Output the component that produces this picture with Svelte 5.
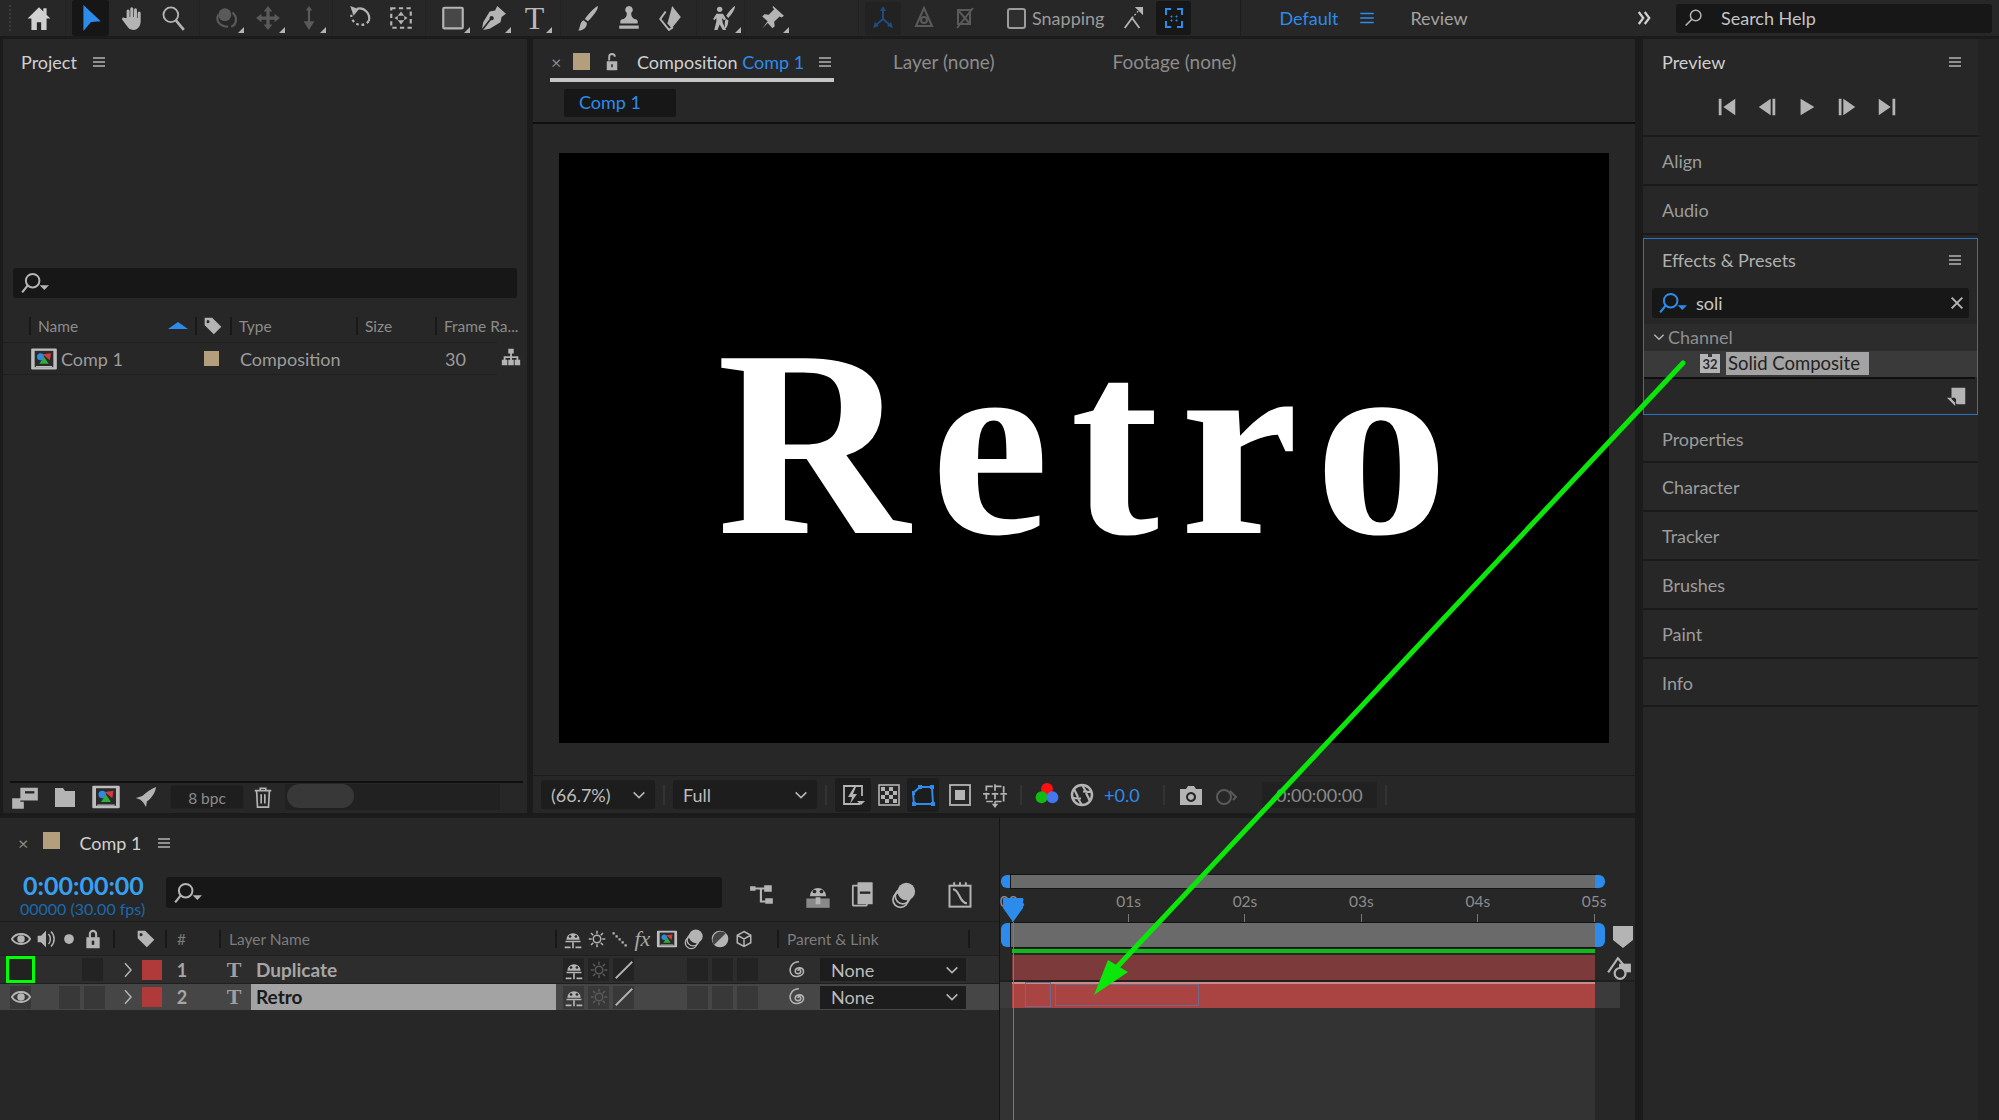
<script>
  const S = 'fill="none" stroke="currentColor"';
  const I = {
    home: '<path d="M12 2 1.500 12.500H5V23h5v-7h4v7h5V12.500h3.500L19 9V3h-3v3z"/>',
    arrow: '<path d="M5 0 21 15l-9 .6L5 24z"/>',
    hand: '<path d="M7 12V5.500a1.400 1.400 0 0 1 2.800 0V11h.6V3.500a1.400 1.400 0 0 1 2.800 0V11h.6V4.500a1.400 1.400 0 0 1 2.800 0V12h.6V7.500a1.400 1.400 0 0 1 2.800 0V15c0 4-2.500 8-6.500 8-3.500 0-5-1.500-6.500-4L3 13.500c-.8-1.500 1-2.500 2-1.500z"/>',
    zoom: `<circle cx="10" cy="9" r="6.800" ${S} stroke-width="1.700"/><path d="M14.500 14 22 23" ${S} stroke-width="2.400"/>`,
    orbit: `<circle cx="10" cy="9" r="6"/><path d="M4 9c-3 6 2 11 9 11M17 7c5 4 4 11-1 13" ${S} stroke-width="2"/>`,
    move: '<path d="M12 1l4 5h-2.500v4.500H18V8l5 4-5 4v-2.500h-4.500V18H16l-4 5-4-5h2.500v-4.500H6V16l-5-4 5-4v2.500h4.500V6H8z"/>',
    updown: '<path d="M12 1l3 4h-2v10h4l-5 8-5-8h4V5H9z"/>',
    rotate: `<path d="M9 3.500A9 9 0 0 1 20 15" ${S} stroke-width="2"/><path d="M20 15A9 9 0 0 1 4 9" ${S} stroke-width="2" stroke-dasharray="2.500 2.500"/><path d="M3 1l8 3-5 6z"/>`,
    pan: `<rect x="3" y="3" width="18" height="18" ${S} stroke-width="2" stroke-dasharray="4 3"/><path d="M12 6l3 4H9zM12 18l-3-4h6zM6 12l3-2v4zM18 12l-3 2v-4z"/>`,
    rect: `<rect x="3" y="2.500" width="18" height="19" rx="1" fill="#474747" stroke="currentColor" stroke-width="2"/>`,
    pen: '<path d="M15 1l8 7-4 3-1 5-10 6-6 1 7-9a2 2 0 1 0-1-1L1 22l1-6 6-10 5-1z"/>',
    brush: '<path d="M21 1c1 3-5 10-9 14l-3-2C12 9 18 2 21 1zM8 14l3 2.500c0 4-3 7-8 7 2-2 1-8 5-9.500z"/>',
    stamp: '<path d="M12 1a3.500 3.500 0 0 1 2 6.400c0 3 1 4.600 3 5.600 2 .4 3 1 3 2v2H4v-2c0-1 1-1.600 3-2 2-1 3-2.600 3-5.600A3.500 3.500 0 0 1 12 1zM3 19h18v3H3z"/>',
    eraser: `<path d="M14 1l8 10-8 10-4-5z"/><path d="M10 16l4 5-3 2-8-10 5-7" ${S} stroke-width="1.800"/>`,
    puppet: '<circle cx="8" cy="4" r="2.500"/><path d="M5 8h6l3 5-2 1-2-2 1 5 3 6h-3l-3-5-2 5H3l2-8V12l-2 2-1-1zM22 1c1 2-3 8-6 11l-2-2c2-3 6-8 8-9zM14 13l2 1c0 3-1 7-3 8 0-3-1-7 1-9z"/>',
    pin: '<path d="M13 1l10 9-2 1.500-2-1-5 5 .5 4-2 2-4.500-5L3 22l5-7-5-4.500 2-2 4 .5 5-5-1.500-2z"/>',
    axis1: `<path d="M12 2v11M12 13l-8 7M12 13l8 7" ${S} stroke-width="2"/><path d="M12 0l3 5H9zM2 22l2-6 4 4zM22 22l-6-2 4-4z"/>`,
    axis2: `<path d="M12 2L4 20h16z" ${S} stroke-width="2"/><circle cx="12" cy="14" r="3" ${S} stroke-width="2"/>`,
    axis3: `<path d="M5 4h12v14H5zM5 4l12 14M20 2 4 22" ${S} stroke-width="2"/>`,
    snap: `<path d="M3 23l8-11 8 11" ${S} stroke-width="2"/><path d="M11 12 19 3" ${S} stroke-width="1.500" stroke-dasharray="2 2"/><path d="M23 0v9l-9-9z"/>`,
    focus: `<path d="M4 9V3h5M15 3h5v6M4 15v6h5M15 21h5v-6" ${S} stroke-width="2"/><path d="M9 10h1v1H9zM14 10h1v1h-1zM9 14h1v1H9zM14 14h1v1h-1z" stroke="currentColor"/>`,
    search: `<circle cx="14" cy="9" r="6.300" ${S} stroke-width="1.800"/><path d="M9.500 13.500 2 21" ${S} stroke-width="2"/>`,
    searchd: `<circle cx="10" cy="10" r="5.800" ${S} stroke-width="1.700"/><path d="M5.800 14 1 20" ${S} stroke-width="1.900"/><path d="M16 14h8l-4 4z"/>`,
    menu: '<path d="M3 5h18v2H3zM3 11h18v2H3zM3 17h18v2H3z"/>',
    first: '<path d="M3 3h3v18H3zM21 3v18L8 12z"/>',
    prev: '<path d="M18 3h3v18h-3zM16 3v18L3 12z"/>',
    play: '<path d="M5 3v18l15-9z"/>',
    next: '<path d="M3 3h3v18H3zM8 3v18l13-9z"/>',
    last: '<path d="M18 3h3v18h-3zM3 3v18l13-9z"/>',
    chev: `<path d="M4 8l8 8 8-8" ${S} stroke-width="2.400"/>`,
    right: `<path d="M8 3l8 9-8 9" ${S} stroke-width="2"/>`,
    dbl: `<path d="M5 4l6 8-6 8M13 4l6 8-6 8" ${S} stroke-width="3"/>`,
    lockopen: '<path d="M5 11h14v12H5zM7 10V5a5 5 0 0 1 10 0h-2.500a2.500 2.500 0 0 0-5 0v5z"/><path d="M11 15h2v4h-2z" fill="#272727"/>',
    tag: '<path d="M2 2h9l11 11-9 9L2 11zM6.500 5A1.800 1.800 0 1 0 6.600 8.500 1.800 1.800 0 0 0 6.500 5z"/>',
    tree: '<path d="M9 2h6v5h-2v3h7v4h2v6h-6v-6h2v-2h-5v2h2v6H9v-6h2v-2H6v2h2v6H2v-6h2v-4h7V7H9z"/>',
    film: `<rect x="1" y="3" width="22" height="18" rx="1" fill="#bdbdbd"/><rect x="4" y="5" width="16" height="14" fill="#2a2a2a"/><circle cx="9" cy="10" r="3" fill="#2f8ae0"/><path d="M11 8l7-1-1 6z" fill="#d63a3a"/><path d="M12 10l4 6H8z" fill="#2fae3f"/><path d="M5 18h14v1H5z" fill="#bdbdbd"/>`,
    interp: '<path d="M8 4h15v11H8zM1 13h7v3h3v6H1zM1 20h10"/><path d="M12 7h8v2h-8z" fill="#272727"/>',
    folder: '<path d="M2 3h8l2 3h10v16H2z"/>',
    rocket: '<path d="M23 1c-1 7-5 12-10 16l-1 6-3-5-3-3-5-2 7-2C12 7 17 3 23 1z"/>',
    trash: `<path d="M3 5h18M9 5V2.500h6V5M5 5l1 18h12l1-18M10 9v10M14 9v10" ${S} stroke-width="1.800"/>`,
    flash: `<path d="M19 21H3V3h18v10" ${S} stroke-width="1.800"/><path d="M13 4l-6 10h4l-2 7 7-10h-4l3-7z"/><path d="M16 18h8l-4 4z"/>`,
    checker: `<rect x="2" y="2" width="20" height="20" ${S} stroke-width="1.600"/><path d="M4 4h4v4H4zM12 4h4v4h-4zM8 8h4v4H8zM16 8h4v4h-4zM4 12h4v4H4zM12 12h4v4h-4zM8 16h4v4H8zM16 16h4v4h-4z"/>`,
    mask: `<path d="M9 4h12l1 17H3L2 10z" ${S} stroke-width="2"/><path d="M7 2h4v4H7zM19 2h4v4h-4zM1 8h3v4H1zM1 19h4v4H1zM20 19h4v4h-4z"/>`,
    safe: `<rect x="2" y="2" width="20" height="20" ${S} stroke-width="1.800"/><rect x="7" y="7" width="10" height="10"/>`,
    grid: `<path d="M4 4h16v14H4zM12 2v18M1 11h22" ${S} stroke-width="1.600" stroke-dasharray="6 2"/><path d="M9 20h6l-3 4z"/>`,
    rgb: '<circle cx="12" cy="6.500" r="5.500" fill="#f11"/><circle cx="7" cy="14" r="5.500" fill="#1b1"/><circle cx="17" cy="14" r="5.500" fill="#47e"/>',
    aperture: `<circle cx="12" cy="12" r="10" ${S} stroke-width="2.500"/><path d="M12 2l5 8M22 9l-9-.5M20 18l-4-8M12 22l-5-8M2 15l9 .5M4 6l4 8" ${S} stroke-width="2.200"/>`,
    camera: '<path d="M1 6h6l2-3h6l2 3h6v16H1zM12 9a5 5 0 1 0 .1 0zM12 11a3 3 0 1 1-.1 0z" fill-rule="evenodd"/>',
    link2: `<circle cx="9" cy="14" r="7" ${S} stroke-width="2"/><path d="M15 8l6 6-3 3" ${S} stroke-width="2"/>`,
    flow: `<path d="M3 6h12M11 6v12h5M11 6h5" ${S} stroke-width="2"/><path d="M1 4h5v4H1zM14 3h7v6h-7zM15 15h7v5h-7z"/>`,
    shy: `<path d="M3 14h18v2H3zM2 21h7v2H2zM15 21h7v2h-7z"/><path d="M4 13a8 8 0 0 1 16 0zM11 16h2v7h-2z"/><circle cx="8.500" cy="9" r="1.600" fill="#272727"/><circle cx="15.500" cy="9" r="1.600" fill="#272727"/>`,
    shyup: `<path d="M2 15h20v8H2z" opacity=".7"/><path d="M5 13a7 7 0 0 1 14 0zM10 14h4v6h-4z"/><circle cx="9" cy="9" r="1.600" fill="#272727"/><circle cx="15" cy="9" r="1.600" fill="#272727"/>`,
    stack: `<rect x="5" y="4" width="12" height="17" rx=".5" ${S} stroke-width="1.500"/><rect x="9" y="1" width="13" height="19" rx=".5"/><path d="M11 9h9v2h-9z" fill="#272727"/>`,
    circles: `<circle cx="9" cy="16" r="6.500" ${S} stroke-width="1.500"/><circle cx="11" cy="13" r="6.500" ${S} stroke-width="1.500" /><circle cx="14" cy="9" r="7.500"/>`,
    graph: `<rect x="3" y="4" width="18" height="18" ${S} stroke-width="1.700"/><path d="M6 7c6 0 5 12 12 12M7 1v3M12 1v3M17 1v3" ${S} stroke-width="1.700"/>`,
    eye: `<path d="M1 12c5-8 17-8 22 0-5 8-17 8-22 0z" ${S} stroke-width="2.200"/><circle cx="12" cy="12" r="4.500"/>`,
    speaker: `<path d="M2 8h4l6-6v20l-6-6H2z"/><path d="M15 6c3 3 3 9 0 12M18 3c5 5 5 13 0 18" ${S} stroke-width="1.800"/>`,
    dot: '<circle cx="12" cy="12" r="6.500"/>',
    lock: '<path d="M4 10h16v13H4zM7 10V6a5 5 0 0 1 10 0v4h-2.500V6a2.500 2.500 0 0 0-5 0v4z"/><path d="M10.500 14h3v5h-3z" fill="#272727"/>',
    sun: `<circle cx="12" cy="12" r="5" ${S} stroke-width="2"/><path d="M12 1v4M12 19v4M1 12h4M19 12h4M4 4l3 3M17 17l3 3M20 4l-3 3M7 17l-3 3" ${S} stroke-width="2"/>`,
    dots: '<path d="M2 3h3v3H2zM6 7h3v3H6zM10 11h3v3h-3zM14 15h3v3h-3zM18 19h3v3h-3z"/>',
    slash: `<path d="M3 21 21 3" ${S} stroke-width="2"/>`,
    halfdisc: `<circle cx="12" cy="12" r="10"/><path d="M5 19 19 5A10 10 0 0 0 5 19z" fill="#444"/>`,
    cube: `<path d="M12 2l9 5v10l-9 5-9-5V7zM3 7l9 5 9-5M12 12v10" ${S} stroke-width="2"/>`,
    spiral: `<path d="M12 13c0-2 3-2 3 .5 0 3-6 3.500-6 0C9 9 17 8 18 13c1 6-11 9-14 2C2 9 6 3 13 3" ${S} stroke-width="1.700"/>`,
    shield: '<path d="M2 1h20v14l-10 8-10-8z"/>',
    flowside: `<path d="M2 16 11 3l6 7" ${S} stroke-width="2"/><path d="M12 8h11v8H12z"/><circle cx="13" cy="17" r="5" fill="#272727" stroke="currentColor" stroke-width="2"/>`,
    newdoc: '<path d="M6 3h15v18H12l-6-6zM1 14h9v9z" fill-rule="evenodd"/><path d="M6 15h5v5z" fill="#272727"/>',
    close: `<path d="M4 4l16 16M20 4 4 20" ${S} stroke-width="3"/>`
  };

  const tools = [
    [{ n: 'arrow', cls: 'blue on' }, { n: 'hand' }, { n: 'zoom' }],
    [{ n: 'orbit', cls: 'dim', more: 1 }, { n: 'move', cls: 'dim', more: 1 }, { n: 'updown', cls: 'dim', more: 1 }],
    [{ n: 'rotate' }, { n: 'pan' }],
    [{ n: 'rect', more: 1 }, { n: 'pen', more: 1 }, { t: 'T', more: 1 }],
    [{ n: 'brush' }, { n: 'stamp' }, { n: 'eraser' }],
    [{ n: 'puppet', more: 1 }],
    [{ n: 'pin', more: 1 }]
  ];
  const dock = ['Properties', 'Character', 'Tracker', 'Brushes', 'Paint', 'Info'];
  const ticks = ['00s', '01s', '02s', '03s', '04s', '05s'];
  const layers = [
    { n: 1, name: 'Duplicate', sel: false },
    { n: 2, name: 'Retro', sel: true }
  ];
</script>

{#snippet ic(name, size = 20, cls = '')}
  <svg class="ic {cls}" width={size} height={size} viewBox="0 0 24 24" fill="currentColor">{@html I[name]}</svg>
{/snippet}

<div class="app">
  <header class="toolbar">
    <i class="grip"></i>
    <div class="home">{@render ic('home', 26, 'bright')}</div>
    {#each tools as group, g}
      <div class="group g{g}">
        {#each group as t}
          <div class="tool {t.cls ?? ''}" class:more={t.more}>
            {#if t.t}<span class="t-tool">{t.t}</span>{:else}{@render ic(t.n, 26)}{/if}
          </div>
        {/each}
      </div>
    {/each}
    <div class="group axis">
      <div class="axis-on">{@render ic('axis1', 24, 'navy')}</div>
      <div class="tool dim">{@render ic('axis2', 24)}</div>
      <div class="tool dim">{@render ic('axis3', 24)}</div>
    </div>
    <div class="snapping">
      <span class="check"></span>
      <span>Snapping</span>
      <div class="snap-ic">{@render ic('snap', 22)}</div>
      <div class="focus">{@render ic('focus', 24, 'blue')}</div>
    </div>
    <div class="work">
      <span class="blue">Default</span>
      {@render ic('menu', 18, 'blue')}
      <span class="review">Review</span>
    </div>
    <div class="more-btn">{@render ic('dbl', 18, 'bright')}</div>
    <div class="help">{@render ic('search', 20)}<span>Search Help</span></div>
  </header>

  <div class="main">
    <div class="left">
      <div class="upper">
        <section class="panel project">
          <div class="p-title"><span class="hi">Project</span>{@render ic('menu', 16)}</div>
          <div class="p-space"></div>
          <div class="searchbox wide">{@render ic('searchd', 28)}</div>
          <div class="col-head">
            <span>Name<i class="sort"></i></span>
            <span class="center">{@render ic('tag', 20)}</span>
            <span>Type</span>
            <span>Size</span>
            <span>Frame Ra...</span>
          </div>
          <div class="proj-row">
            <div class="pr-icon">{@render ic('film', 28)}</div>
            <span class="pr-name">Comp 1</span>
            <i class="swatch tan small"></i>
            <span class="pr-type">Composition</span>
            <span class="pr-rate">30</span>
            <div class="pr-tree">{@render ic('tree', 22)}</div>
          </div>
          <div class="p-fill"></div>
          <div class="proj-foot">
            {@render ic('interp', 28)}
            {@render ic('folder', 24)}
            {@render ic('film', 30)}
            {@render ic('rocket', 22)}
            <span class="bpc">8 bpc</span>
            <span class="trash">{@render ic('trash', 22)}</span>
            <div class="scroll"><i></i></div>
          </div>
        </section>

        <section class="panel comp">
          <div class="c-tabs">
            <div class="c-active">
              <span class="x">×</span>
              <i class="swatch tan"></i>
              {@render ic('lockopen', 18)}
              <span class="hi c-name">Composition <b class="blue">Comp 1</b></span>
              {@render ic('menu', 16)}
            </div>
            <span class="c-tab one">Layer (none)</span>
            <span class="c-tab two">Footage (none)</span>
          </div>
          <div class="c-crumb"><span class="blue">Comp 1</span></div>
          <div class="viewer">
            <div class="canvas"><span class="retro">Retro</span></div>
          </div>
          <div class="c-foot">
            <div class="select s1"><span>(66.7%)</span>{@render ic('chev', 16)}</div>
            <i class="sep"></i>
            <div class="select s2"><span>Full</span>{@render ic('chev', 16)}</div>
            <i class="sep"></i>
            <div class="btn dark">{@render ic('flash', 24)}</div>
            <div class="btn">{@render ic('checker', 24)}</div>
            <div class="btn dark narrow">{@render ic('mask', 24, 'blue')}</div>
            <div class="btn safe">{@render ic('safe', 24)}</div>
            <div class="btn w2">{@render ic('grid', 26)}</div>
            <i class="sep"></i>
            <div class="btn w2">{@render ic('rgb', 26)}</div>
            <div class="btn">{@render ic('aperture', 24)}</div>
            <span class="blue exposure">+0.0</span>
            <i class="sep"></i>
            <div class="btn">{@render ic('camera', 24)}</div>
            <div class="btn dim">{@render ic('link2', 24)}</div>
            <span class="cam-time">0:00:00:00</span>
            <i class="sep"></i>
          </div>
        </section>
      </div>

      <section class="panel timeline">
        <div class="tl-left">
          <div class="tl-tab">
            <span class="x">×</span>
            <i class="swatch tan"></i>
            <span class="hi">Comp 1</span>
            {@render ic('menu', 16)}
          </div>
          <div class="tl-ctrl">
            <div class="timecode">
              <b class="tc-main">0:00:00:00</b>
              <span class="tc-sub">00000 (30.00 fps)</span>
            </div>
            <div class="searchbox tl-search">{@render ic('searchd', 28)}</div>
            <div class="tl-btns">
              <span class="first">{@render ic('flow', 26)}</span>
              <span>{@render ic('shyup', 28)}</span>
              <span>{@render ic('stack', 28)}</span>
              <span>{@render ic('circles', 28)}</span>
              <span class="last">{@render ic('graph', 28)}</span>
            </div>
          </div>
          <div class="l-head">
            <div class="lh-av">
              {@render ic('eye', 20)}{@render ic('speaker', 20)}{@render ic('dot', 18)}{@render ic('lock', 20)}
            </div>
            <i class="bar b1"></i>
            <div class="lh-tag">{@render ic('tag', 20)}</div>
            <i class="bar"></i>
            <span class="lh-num">#</span>
            <i class="bar"></i>
            <span class="lh-name">Layer Name</span>
            <i class="bar"></i>
            <div class="lh-sw">
              {@render ic('shy', 20)}{@render ic('sun', 18)}{@render ic('dots', 18)}
              <span class="fx">fx</span>
              {@render ic('film', 22)}{@render ic('circles', 22)}{@render ic('halfdisc', 20)}{@render ic('cube', 18)}
            </div>
            <i class="bar"></i>
            <span class="lh-parent">Parent &amp; Link</span>
            <i class="bar b2"></i>
          </div>
          {#each layers as l}
            <div class="l-row" class:sel={l.sel}>
              <div class="l-av">
                {#if l.sel}
                  <div class="cell">{@render ic('eye', 20)}</div>
                {:else}
                  <div class="green-cell"></div>
                {/if}
                <div class="cell right2" class:clear={!l.sel}></div>
                <div class="cell"></div>
              </div>
              <div class="l-chev">{@render ic('right', 18)}</div>
              <i class="l-swatch"></i>
              <b class="l-num">{l.n}</b>
              <span class="l-t">T</span>
              <b class="l-name">{l.name}</b>
              <div class="l-cells">
                <div class="cell">{@render ic('shy', 20)}</div>
                <div class="cell">{@render ic('sun', 18, 'dim')}</div>
                <div class="cell">{@render ic('slash', 22)}</div>
              </div>
              <div class="l-cells mid">
                <div class="cell"></div>
                <div class="cell"></div>
                <div class="cell"></div>
              </div>
              <div class="l-spiral">{@render ic('spiral', 22)}</div>
              <div class="l-drop"><span>None</span>{@render ic('chev', 16)}</div>
            </div>
          {/each}
        </div>

        <div class="tl-right">
          <div class="nav">
            <i class="cap"></i>
            <div class="nav-bar"></div>
            <i class="cap end"></i>
          </div>
          <div class="ruler">
            {#each ticks as t}
              <div class="tick"><span>{t}</span><i></i></div>
            {/each}
          </div>
          <div class="workrow">
            <div class="nav big">
              <i class="cap"></i>
              <div class="nav-bar"></div>
              <i class="cap end"></i>
            </div>
            <div class="side">{@render ic('shield', 24)}</div>
          </div>
          <div class="green-bar"></div>
          <div class="track one">
            <div class="clip"></div>
            <div class="side s2">{@render ic('flowside', 26)}</div>
          </div>
          <div class="track two">
            <div class="clip">
              <i class="sel-a"></i>
              <i class="sel-b"></i>
            </div>
          </div>
          <div class="track-fill"><div></div></div>
          <div class="playhead"><svg width="22" height="24" viewBox="0 0 22 24"><path d="M1 0h20v10L11 24 1 10z" fill="#2d8ceb"/></svg><i></i></div>
        </div>
      </section>
    </div>

    <aside class="right">
      <section class="d-block">
        <div class="d-head"><span class="hi">Preview</span>{@render ic('menu', 16)}</div>
        <div class="transport">
          {@render ic('first', 22)}{@render ic('prev', 22)}{@render ic('play', 22)}{@render ic('next', 22)}{@render ic('last', 22)}
        </div>
      </section>
      <div class="d-item">Align</div>
      <div class="d-item">Audio</div>
      <section class="effects">
        <div class="d-head e"><span>Effects &amp; Presets</span>{@render ic('menu', 16)}</div>
        <div class="searchbox e-search">
          {@render ic('searchd', 28, 'blue')}
          <span>soli</span>
          <div class="e-x">{@render ic('close', 16)}</div>
        </div>
        <div class="e-cat">{@render ic('chev', 14)}<span>Channel</span></div>
        <div class="e-row">
          <span class="e-badge">32</span>
          <span class="e-sel">Solid Composite</span>
        </div>
        <div class="e-foot">{@render ic('newdoc', 22)}</div>
      </section>
      {#each dock as d}
        <div class="d-item">{d}</div>
      {/each}
    </aside>
    <div class="strip"></div>
  </div>

  <svg class="annot" width="1999" height="1120" viewBox="0 0 1999 1120">
    <path d="M1683 363 1118 966" stroke="#0be60b" stroke-width="5" stroke-linecap="round" />
    <path d="M1094 995 1108 960 1128 972z" fill="#0be60b" />
  </svg>
</div>

<style>
  :global(body) {
    margin: 0;
    background: #1b1b1b;
  }

  .app {
    position: relative;
    width: 1999px;
    height: 1120px;
    overflow: hidden;
    background: #1b1b1b;
    color: #a3a3a3;
    font-family: Lato, 'Noto Sans', sans-serif;
    font-size: 18px;
  }

  .ic {
    display: block;
    flex: none;
    color: #b4b4b4;
  }
  .ic.bright, .hi { color: #d0d0d0; }
  .ic.blue, .blue, b.blue { color: #2d8ceb; font-weight: 400; }
  .ic.navy { color: #1f4c7e; }
  .ic.dim, .dim .ic { color: #5a5a5a; }

  /* top bar */
  .toolbar {
    display: flex;
    align-items: center;
    height: 36px;
    background: #272727;
    overflow: hidden;
  }
  .grip {
    display: block;
    height: 26px;
    margin-left: 9px;
    border-left: 2px dotted #3c3c3c;
  }
  .home {
    width: 41px;
    margin-left: 7px;
    display: flex;
    justify-content: center;
  }
  .group {
    display: flex;
    align-items: center;
    height: 36px;
    margin-left: 6px;
    padding-left: 6px;
    border-left: 1px solid #222;
  }
  .g2 { margin-left: 3px; }
  .g3 { margin-left: 4px; }
  .g4 { margin-left: 5px; }
  .g6 { margin-left: 0; }
  .tool {
    position: relative;
    width: 41px;
    height: 36px;
    display: flex;
    align-items: center;
    justify-content: center;
  }
  .tool.on {
    background: #161616;
    border-radius: 3px;
    width: 37px;
    margin-right: 2px;
  }
  .tool.on .ic { color: #2d8ceb; }
  .tool.more::after {
    content: '';
    position: absolute;
    right: 3px;
    bottom: 3px;
    border-style: solid;
    border-width: 0 0 6px 6px;
    border-color: transparent transparent #b4b4b4 transparent;
  }
  .t-tool {
    font-family: 'Liberation Serif', serif;
    font-size: 32px;
    color: #b9b9b9;
    line-height: 1;
  }
  .group.axis { margin-left: 66px; }
  .axis-on {
    width: 36px;
    height: 33px;
    background: #222;
    border-radius: 3px;
    display: flex;
    align-items: center;
    justify-content: center;
    margin-right: 2px;
  }
  .snapping {
    display: flex;
    align-items: center;
    margin-left: 22px;
    gap: 5px;
    color: #9b9b9b;
  }
  .check {
    width: 19px;
    height: 21px;
    border: 2px solid #9b9b9b;
    border-radius: 3px;
    background: #2e2e2e;
    box-sizing: border-box;
    margin-right: 1px;
  }
  .snap-ic { margin-left: 13px; }
  .focus {
    width: 35px;
    height: 34px;
    background: #171717;
    border-radius: 3px;
    display: flex;
    align-items: center;
    justify-content: center;
    margin-left: 7px;
  }
  .work {
    display: flex;
    align-items: center;
    gap: 20px;
    height: 36px;
    margin-left: 49px;
    padding-left: 38px;
    border-left: 1px solid #1d1d1d;
  }
  .review { margin-left: 14px; }
  .more-btn { margin: 0 23px 0 auto; }
  .help {
    display: flex;
    align-items: center;
    gap: 17px;
    width: 316px;
    height: 29px;
    margin-right: 7px;
    padding-left: 8px;
    box-sizing: border-box;
    background: #171717;
    border-radius: 3px;
    color: #c4c4c4;
    flex: none;
  }

  /* main layout */
  .main {
    display: flex;
    height: 1081px;
    margin-top: 3px;
  }
  .left {
    width: 1635px;
    display: flex;
    flex-direction: column;
    gap: 5px;
    flex: none;
  }
  .upper {
    display: flex;
    height: 774px;
    gap: 6px;
  }
  .panel { background: #272727; }
  .swatch {
    display: block;
    width: 17px;
    height: 17px;
    flex: none;
  }
  .tan { background: #b39f7c; }
  .swatch.small { width: 15px; height: 15px; }
  .x { color: #8a8a8a; font-size: 18px; }

  /* project */
  .project {
    width: 524px;
    margin-left: 3px;
    display: flex;
    flex-direction: column;
  }
  .p-title {
    display: flex;
    align-items: center;
    gap: 14px;
    height: 46px;
    padding-left: 18px;
  }
  .p-space { height: 183px; }
  .searchbox {
    display: flex;
    align-items: center;
    box-sizing: border-box;
    background: #171717;
    border-radius: 3px;
  }
  .searchbox.wide {
    height: 30px;
    margin: 0 10px;
    padding-left: 8px;
  }
  .col-head {
    display: grid;
    grid-template-columns: 166px 35px 126px 79px 82px;
    height: 32px;
    margin: 12px 0 0 26px;
    align-items: center;
    font-size: 15.500px;
    color: #8c8c8c;
  }
  .col-head span {
    position: relative;
    display: flex;
    align-items: center;
    height: 18px;
    border-left: 2px solid #181818;
    padding-left: 7px;
    white-space: nowrap;
  }
  .col-head span.center { padding-left: 6px; }
  .sort {
    position: absolute;
    right: 7px;
    top: 5px;
    border-style: solid;
    border-width: 0 10px 7px 10px;
    border-color: transparent transparent #2d8ceb transparent;
  }
  .proj-row {
    display: flex;
    align-items: center;
    height: 31px;
    border-top: 1px solid #1f1f1f;
    border-bottom: 1px solid #1f1f1f;
    margin-right: 30px;
    color: #9c9c9c;
    position: relative;
  }
  .pr-icon { margin-left: 27px; }
  .pr-name { margin-left: 3px; width: 143px; }
  .pr-type { margin-left: 21px; width: 205px; }
  .pr-rate { width: 30px; }
  .pr-tree { position: absolute; right: -25px; top: 4px; }
  .p-fill { flex: 1; }
  .proj-foot {
    display: flex;
    align-items: center;
    gap: 14px;
    height: 28px;
    border-top: 2px solid #0f0f0f;
    margin: 0 4px 2px 7px;
    padding-left: 1px;
    position: relative;
  }
  .bpc {
    width: 74px;
    height: 24px;
    line-height: 24px;
    background: #1e1e1e;
    border: 1px solid #232323;
    border-radius: 3px;
    box-sizing: border-box;
    text-align: center;
    font-size: 15.500px;
    color: #8c8c8c;
    margin-left: -1px;
  }
  .trash { margin-left: -6px; }
  .scroll {
    width: 213px;
    height: 26px;
    background: #212121;
    border-radius: 2px;
    margin-left: -3px;
    padding-left: 2px;
  }
  .scroll i {
    display: block;
    width: 67px;
    height: 24px;
    border-radius: 12px;
    background: #383838;
  }

  /* composition */
  .comp {
    flex: 1;
    display: flex;
    flex-direction: column;
  }
  .c-tabs {
    display: flex;
    align-items: flex-start;
    height: 43px;
  }
  .c-active {
    display: flex;
    align-items: center;
    gap: 13px;
    height: 33px;
    padding-top: 6px;
    width: 284px;
    margin-left: 17px;
    border-bottom: 4px solid #c6c6c6;
  }
  .c-active .x { width: 10px; margin-left: 1px; margin-right: -1px; }
  .c-name { white-space: nowrap; margin-left: 3px; }
  .c-tab { height: 46px; line-height: 46px; color: #8c8c8c; font-size: 19px; }
  .c-tab.one { margin-left: 59px; }
  .c-tab.two { margin-left: 118px; }
  .c-crumb {
    height: 42px;
    padding: 7px 0 0 31px;
    box-sizing: border-box;
    border-bottom: 2px solid #0f0f0f;
  }
  .c-crumb span {
    display: block;
    width: 112px;
    height: 28px;
    line-height: 27px;
    padding-left: 15px;
    box-sizing: border-box;
    background: #171717;
    border-radius: 2px;
  }
  .viewer {
    flex: 1;
    padding: 29px 26px 32px 26px;
    display: flex;
  }
  .canvas {
    flex: 1;
    background: #000;
    display: flex;
    align-items: center;
    justify-content: center;
    padding-bottom: 10px;
  }
  .retro {
    font-family: 'Liberation Serif', serif;
    font-weight: 700;
    font-size: 267px;
    letter-spacing: 21px;
    color: #fff;
    line-height: 1;
    margin-left: 18px;
  }
  .c-foot {
    display: flex;
    align-items: center;
    height: 38px;
    border-top: 1px solid #1b1b1b;
    padding-left: 8px;
    box-sizing: border-box;
  }
  .select {
    display: flex;
    align-items: center;
    justify-content: space-between;
    height: 29px;
    padding: 0 8px 0 10px;
    box-sizing: border-box;
    background: #1d1d1d;
    border-radius: 3px;
    color: #bdbdbd;
  }
  .s1 { width: 114px; }
  .s2 { width: 144px; }
  .sep {
    display: block;
    width: 2px;
    height: 20px;
    background: #333;
    margin: 0 8px;
    flex: none;
  }
  .btn {
    width: 36px;
    height: 34px;
    display: flex;
    align-items: center;
    justify-content: center;
    flex: none;
  }
  .btn.dark {
    background: #1d1d1d;
    border-radius: 3px;
  }
  .btn.narrow { width: 32px; }
  .btn.safe { margin-left: 3px; }
  .btn.w2 { width: 34px; }
  .exposure { margin: 0 16px 0 4px; width: 35px; }
  .cam-time {
    margin-left: 17px;
    width: 115px;
    height: 26px;
    line-height: 26px;
    padding-left: 14px;
    box-sizing: border-box;
    background: #212121;
    color: #8c8c8c;
    white-space: nowrap;
  }

  /* timeline */
  .timeline {
    flex: 1;
    display: flex;
    position: relative;
  }
  .tl-left { width: 999px; flex: none; }
  .tl-tab {
    display: flex;
    align-items: center;
    height: 49px;
    padding-left: 18px;
    gap: 15px;
  }
  .tl-tab .swatch { margin: -4px 4px 0 0; }
  .tl-ctrl {
    display: flex;
    height: 54px;
    align-items: flex-start;
  }
  .timecode {
    display: flex;
    flex-direction: column;
    width: 166px;
    padding-left: 21px;
    box-sizing: border-box;
    margin-top: 6px;
  }
  .tc-main {
    color: #38a0f2;
    font-size: 25px;
    font-weight: 700;
    line-height: 24px;
    margin-left: 2px;
  }
  .tc-sub {
    color: #1b69ad;
    font-size: 16px;
    line-height: 19px;
    margin-left: -1px;
    margin-top: 2px;
    white-space: nowrap;
  }
  .tl-search {
    width: 556px;
    height: 31px;
    margin-top: 10px;
    padding-left: 8px;
  }
  .tl-btns {
    display: flex;
    align-items: center;
    margin: 14px 0 0 27px;
    gap: 15px;
  }
  .tl-btns .first { margin-right: 14px; }
  .tl-btns .last { margin-left: 13px; }
  .l-head {
    display: flex;
    align-items: center;
    height: 34px;
    font-size: 15.500px;
    color: #7d7d7d;
    border-top: 1px solid #1d1d1d;
    box-sizing: border-box;
  }
  .lh-av {
    display: flex;
    align-items: center;
    gap: 4.500px;
    margin-left: 11px;
    width: 102px;
  }
  .bar {
    display: block;
    width: 2px;
    height: 18px;
    background: #181818;
    flex: none;
  }
  .lh-tag { width: 50px; padding-left: 21px; box-sizing: border-box; }
  .lh-num { width: 52px; padding-left: 10px; box-sizing: border-box; }
  .lh-name { width: 334px; padding-left: 8px; box-sizing: border-box; }
  .lh-sw {
    display: flex;
    align-items: center;
    justify-content: space-between;
    width: 190px;
    padding: 0 24px 0 6px;
  }
  .fx {
    font-family: 'Liberation Serif', serif;
    font-style: italic;
    font-size: 22px;
    color: #a8a8a8;
  }
  .lh-parent { width: 189px; padding-left: 8px; box-sizing: border-box; }
  .l-row {
    display: flex;
    align-items: center;
    height: 28px;
    background: #2d2d2d;
    box-sizing: border-box;
    border-top: 1px solid #1f1f1f;
    color: #a6a6a6;
  }
  .l-row.sel {
    height: 27px;
    background: #464646;
  }
  .l-av {
    display: flex;
    align-items: center;
    width: 105px;
    flex: none;
  }
  .cell {
    width: 21px;
    height: 23px;
    background: #383838;
    display: flex;
    align-items: center;
    justify-content: center;
    flex: none;
  }
  .l-row:not(.sel) .cell { background: #232323; }
  .l-av .cell:first-child { margin-left: 10px; }
  .l-av .right2 { margin-left: 28px; }
  .l-av .right2.clear { background: none !important; }
  .l-av .cell:last-child { margin-left: 4px; }
  .green-cell {
    width: 29px;
    height: 27px;
    margin-left: 6px;
    border: 3px solid #0f0;
    box-sizing: border-box;
    background: #222;
    margin-right: -6px;
  }
  .l-chev { width: 16px; margin-left: 14px; }
  .l-swatch {
    display: block;
    width: 20px;
    height: 20px;
    margin-left: 7px;
    background: #b03a3a;
    flex: none;
  }
  .l-num { width: 20px; margin-left: 10px; text-align: center; }
  .l-t {
    width: 20px;
    margin-left: 32px;
    font-family: 'Liberation Serif', serif;
    font-size: 22px;
    font-weight: 700;
    text-align: center;
    color: #a0a0a0;
  }
  .l-name {
    width: 305px;
    margin-left: 7px;
    padding-left: 5px;
    box-sizing: border-box;
    flex: none;
    line-height: 26px;
    font-size: 19px;
  }
  .sel .l-name { background: #a3a3a3; color: #1a1a1a; }
  .l-cells {
    display: flex;
    gap: 4px;
    margin-left: 7px;
    width: 71px;
    flex: none;
  }
  .l-cells.mid { margin-left: 53px; }
  .l-spiral { margin-left: 29px; width: 24px; }
  .l-drop {
    display: flex;
    align-items: center;
    justify-content: space-between;
    width: 146px;
    height: 23px;
    margin-left: 9px;
    padding: 0 6px 0 11px;
    box-sizing: border-box;
    background: #1d1d1d;
    color: #bcbcbc;
    flex: none;
  }

  .tl-right {
    position: relative;
    flex: 1;
    min-width: 0;
    padding-top: 57px;
    border-left: 1px solid #141414;
    display: flex;
    flex-direction: column;
  }
  .nav {
    display: flex;
    width: 604px;
    height: 13px;
    margin-left: 1px;
    flex: none;
  }
  .nav-bar {
    flex: 1;
    background: #6a6a6a;
    box-shadow: 0 0 0 1px #141414;
  }
  .cap {
    display: block;
    width: 10px;
    background: #2d8ceb;
    border-radius: 6px 0 0 6px;
    flex: none;
  }
  .cap.end { border-radius: 0 6px 6px 0; }
  .ruler {
    display: flex;
    height: 35px;
    margin-left: -46px;
    font-size: 15.500px;
    color: #8c8c8c;
  }
  .tick {
    width: 116.400px;
    flex: none;
    display: flex;
    flex-direction: column;
    align-items: center;
    padding-top: 4px;
    box-sizing: border-box;
  }
  .tick i {
    display: block;
    width: 1px;
    height: 8px;
    margin-top: 4px;
    background: #777;
  }
  .workrow {
    display: flex;
    height: 24px;
  }
  .nav.big { height: 24px; }
  .side {
    flex: 1;
    display: flex;
    padding-left: 6px;
    margin-top: 2px;
  }
  .green-bar {
    width: 583px;
    height: 4px;
    margin: 2px 0 0 12px;
    background: #12b81c;
  }
  .track {
    position: relative;
    display: flex;
    height: 28px;
    padding-left: 12px;
    box-sizing: border-box;
  }
  .track.one { height: 29px; padding-top: 2px; border-bottom: 2px solid #1f1f1f; }
  .track.one .clip { background: #7c3a3a; height: 25px; border-top: 0; }
  .track.two { height: 26px; background: #3b3b3b; margin-right: 15px; }
  .clip {
    position: relative;
    width: 583px;
    height: 26px;
    flex: none;
    background: #a94442;
    border-top: 2px solid #c98a88;
    box-sizing: border-box;
  }
  .side.s2 { padding-left: 11px; margin-top: 0; }
  .sel-a, .sel-b {
    position: absolute;
    box-sizing: border-box;
    border: 1px solid #6d6a8c;
  }
  .sel-a { left: 13px; top: -2px; width: 26px; height: 25px; }
  .sel-b { left: 43px; top: 0; width: 144px; height: 22px; }
  .track-fill {
    flex: 1;
    padding-right: 40px;
  }
  .track-fill div {
    height: 100%;
    background: #333;
  }
  .playhead {
    position: absolute;
    left: 2px;
    top: 80px;
    bottom: 0;
    width: 22px;
    display: flex;
    flex-direction: column;
    align-items: center;
  }
  .playhead svg { display: block; flex: none; }
  .playhead i {
    display: block;
    flex: 1;
    width: 1px;
    background: #2d8ceb;
  }

  /* right dock */
  .right {
    width: 335px;
    margin-left: 8px;
    background: #272727;
    display: flex;
    flex-direction: column;
    flex: none;
  }
  .strip { flex: 1; background: #232323; }
  .d-block { border-bottom: 2px solid #1a1a1a; height: 98px; box-sizing: border-box; }
  .d-head {
    display: flex;
    align-items: center;
    justify-content: space-between;
    height: 46px;
    padding: 0 15px 0 19px;
  }
  .transport {
    display: flex;
    justify-content: center;
    gap: 18px;
    margin: 11px 0 0 -7px;
  }
  .d-item {
    height: 48.800px;
    line-height: 48px;
    padding-left: 19px;
    border-bottom: 2px solid #1a1a1a;
    box-sizing: border-box;
    color: #9c9c9c;
    flex: none;
  }
  .effects {
    border: 1px solid #2a72c4;
    height: 177px;
    box-sizing: border-box;
    margin-top: 3px;
    flex: none;
    display: flex;
    flex-direction: column;
  }
  .d-head.e { height: 43px; padding-right: 14px; padding-left: 18px; color: #b0b0b0; }
  .e-search {
    position: relative;
    height: 30px;
    margin: 6px 8px 0;
    padding-left: 7px;
    gap: 9px;
    color: #c8c8c8;
  }
  .e-x {
    position: absolute;
    right: 4px;
    top: 7px;
  }
  .e-cat {
    display: flex;
    align-items: center;
    gap: 2px;
    height: 27px;
    margin-top: 6px;
    padding-left: 8px;
    background: #2c2c2c;
    color: #8f8f8f;
  }
  .e-row {
    display: flex;
    align-items: center;
    height: 26px;
    background: #3a3a3a;
    padding-left: 56px;
    gap: 6px;
    flex: none;
  }
  .e-badge {
    position: relative;
    width: 20px;
    height: 19px;
    background: #b4b4b4;
    color: #2a2a2a;
    font-size: 13px;
    font-weight: 700;
    line-height: 21px;
    text-align: center;
  }
  .e-badge::before {
    content: '';
    position: absolute;
    left: 8px;
    top: 0;
    width: 4px;
    height: 3px;
    background: #3a3a3a;
  }
  .e-sel {
    width: 143px;
    height: 23px;
    line-height: 23px;
    padding-left: 2px;
    box-sizing: border-box;
    background: #a3a3a3;
    color: #222;
    font-size: 18.500px;
    white-space: nowrap;
  }
  .e-foot {
    flex: 1;
    border-top: 2px solid #0f0f0f;
    margin-right: 2px;
    display: flex;
    justify-content: flex-end;
    align-items: center;
    padding-right: 7px;
  }

  .annot {
    position: absolute;
    left: 0;
    top: 0;
    pointer-events: none;
  }
</style>
